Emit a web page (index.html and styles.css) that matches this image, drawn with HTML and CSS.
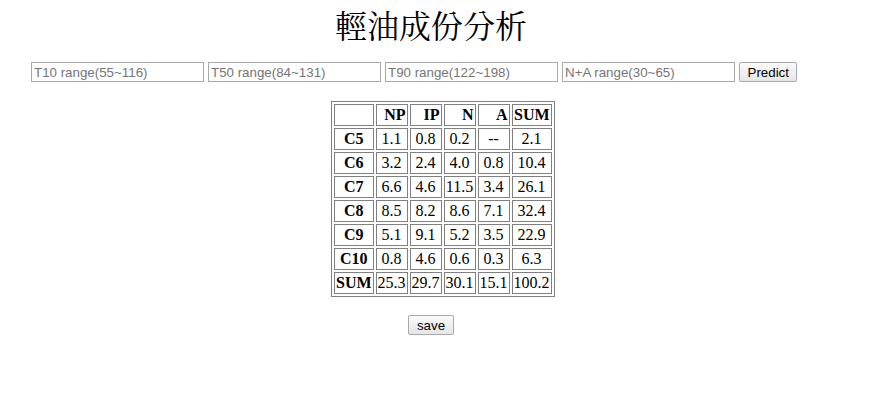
FILE: index.html
```html
<!DOCTYPE html>
<html>
<head>
<meta charset="utf-8">
<link rel="stylesheet" href="styles.css">
</head>
<body>
<div class="page">
  <h1 class="title">輕油成份分析</h1>
  <div class="form-row">
    <input class="range-input" type="text" placeholder="T10 range(55~116)">
    <input class="range-input" type="text" placeholder="T50 range(84~131)">
    <input class="range-input" type="text" placeholder="T90 range(122~198)">
    <input class="range-input" type="text" placeholder="N+A range(30~65)">
    <button class="btn" type="button">Predict</button>
  </div>
  <div class="table-wrap">
    <table class="result" border="1">
      <tr><th></th><th class="colh">NP</th><th class="colh">IP</th><th class="colh">N</th><th class="colh">A</th><th class="colh">SUM</th></tr>
      <tr><th>C5</th><td>1.1</td><td>0.8</td><td>0.2</td><td>--</td><td>2.1</td></tr>
      <tr><th>C6</th><td>3.2</td><td>2.4</td><td>4.0</td><td>0.8</td><td>10.4</td></tr>
      <tr><th>C7</th><td>6.6</td><td>4.6</td><td>11.5</td><td>3.4</td><td>26.1</td></tr>
      <tr><th>C8</th><td>8.5</td><td>8.2</td><td>8.6</td><td>7.1</td><td>32.4</td></tr>
      <tr><th>C9</th><td>5.1</td><td>9.1</td><td>5.2</td><td>3.5</td><td>22.9</td></tr>
      <tr><th>C10</th><td>0.8</td><td>4.6</td><td>0.6</td><td>0.3</td><td>6.3</td></tr>
      <tr><th>SUM</th><td>25.3</td><td>29.7</td><td>30.1</td><td>15.1</td><td>100.2</td></tr>
    </table>
  </div>
  <div class="save-row">
    <button class="btn" type="button">save</button>
  </div>
</div>
</body>
</html>
```
FILE: styles.css
```css
html, body {
  margin: 0;
  padding: 0;
  background: #fff;
}
body {
  margin: 8px;
  font-family: "Liberation Serif", "Noto Serif CJK TC", "Noto Sans CJK TC", serif;
  color: #000;
}
.page {
  width: 846px;
}
.title {
  margin: 0;
  padding-top: 1px;
  text-align: center;
  font-family: "Noto Serif CJK TC", "Noto Sans CJK TC", serif;
  font-weight: normal;
  font-size: 32px;
  line-height: 30px;
  height: 45px;
}
.form-row {
  display: flex;
  align-items: center;
  gap: 4px;
  margin-top: 8px;
  padding-left: 23px;
}
.range-input {
  box-sizing: border-box;
  width: 173px;
  height: 20px;
  margin: 0;
  padding: 1px 2px;
  border: 1px solid #a9a9a9;
  font-family: "Liberation Sans", Arial, sans-serif;
  font-size: 13.33px;
}
.range-input::placeholder {
  color: #757575;
}
.btn {
  box-sizing: border-box;
  height: 20px;
  padding: 0 7.5px;
  margin: 0;
  border: 1px solid #a9a9a9;
  border-radius: 2px;
  background: linear-gradient(#fafafa, #e6e6e6);
  font-family: "Liberation Sans", Arial, sans-serif;
  font-size: 13.33px;
  color: #000;
}
.table-wrap {
  margin-top: 19px;
  padding-left: 323px;
}
.result {
  border-collapse: separate;
  border-spacing: 2px;
  border: 1px solid #808080;
  font-size: 16px;
}
.result th, .result td {
  border: 1px solid #808080;
  padding: 1px;
  height: 18px;
  line-height: 18px;
}
.result td {
  text-align: center;
}
.result th {
  text-align: center;
  font-weight: bold;
}
.result th.colh {
  text-align: right;
}
.save-row {
  margin-top: 18px;
  text-align: center;
}
```
